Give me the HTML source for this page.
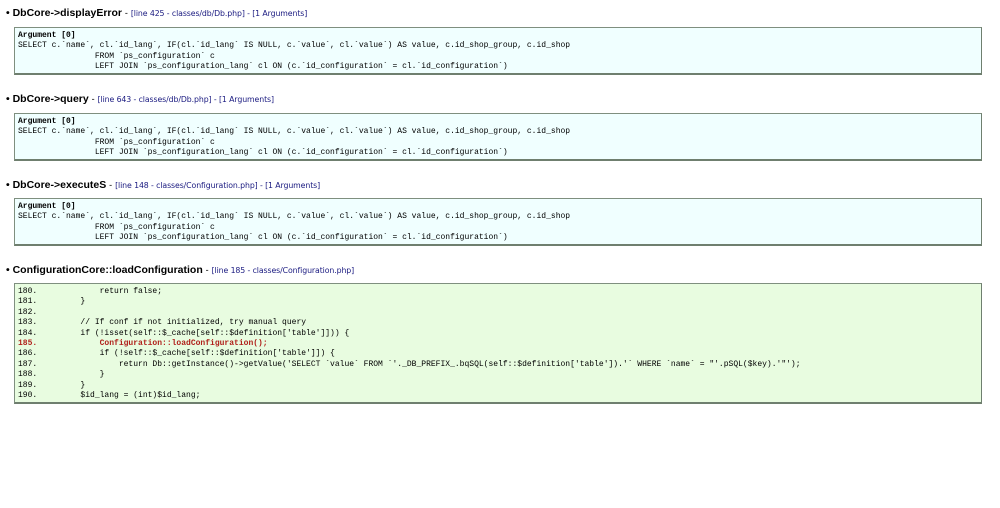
<!DOCTYPE html>
<html><head><meta charset="utf-8"><style>
body{margin:0;background:#fff;width:1000px;height:508px;overflow:hidden;position:relative;font-family:"DejaVu Sans","Liberation Sans",sans-serif}
.h{position:absolute;left:6px;font-family:"Liberation Sans",sans-serif;font-size:10.5px;font-weight:bold;color:#000;white-space:nowrap}
.h .l{font-family:"DejaVu Sans",sans-serif;font-weight:normal;font-size:7.8px;color:#1a1a80;letter-spacing:-0.1px}
.h .d{font-weight:normal;font-size:9px;color:#000}
.b{position:absolute;left:14px;width:966px;border:1px solid #7f8f7f;border-right-color:#6f7f6f;border-bottom:2px solid #6f7f6f;background:#f0ffff}
.g{background:#e8fce0}
pre{margin:0;padding:3px 0 0 3px;font-family:"Liberation Mono","Courier New",monospace;font-size:8px;line-height:10.4px;color:#000}
.r{color:#b0201a;font-weight:bold}
</style></head><body>
<div class="h" style="top:7px">• DbCore-&gt;displayError <span class="d">-</span> <span class="l">[line 425 - classes/db/Db.php] - [1 Arguments]</span></div>
<div class="b" style="top:27px;height:45px"><pre><b>Argument [0]</b>
SELECT c.`name`, cl.`id_lang`, IF(cl.`id_lang` IS NULL, c.`value`, cl.`value`) AS value, c.id_shop_group, c.id_shop
                FROM `ps_configuration` c
                LEFT JOIN `ps_configuration_lang` cl ON (c.`id_configuration` = cl.`id_configuration`)</pre></div>

<div class="h" style="top:93px">• DbCore-&gt;query <span class="d">-</span> <span class="l">[line 643 - classes/db/Db.php] - [1 Arguments]</span></div>
<div class="b" style="top:113px;height:45px"><pre><b>Argument [0]</b>
SELECT c.`name`, cl.`id_lang`, IF(cl.`id_lang` IS NULL, c.`value`, cl.`value`) AS value, c.id_shop_group, c.id_shop
                FROM `ps_configuration` c
                LEFT JOIN `ps_configuration_lang` cl ON (c.`id_configuration` = cl.`id_configuration`)</pre></div>

<div class="h" style="top:179px">• DbCore-&gt;executeS <span class="d">-</span> <span class="l">[line 148 - classes/Configuration.php] - [1 Arguments]</span></div>
<div class="b" style="top:198px;height:45px"><pre><b>Argument [0]</b>
SELECT c.`name`, cl.`id_lang`, IF(cl.`id_lang` IS NULL, c.`value`, cl.`value`) AS value, c.id_shop_group, c.id_shop
                FROM `ps_configuration` c
                LEFT JOIN `ps_configuration_lang` cl ON (c.`id_configuration` = cl.`id_configuration`)</pre></div>

<div class="h" style="top:264px">• ConfigurationCore::loadConfiguration <span class="d">-</span> <span class="l">[line 185 - classes/Configuration.php]</span></div>
<div class="b g" style="top:283px;height:118px"><pre>180.             return false;
181.         }
182.
183.         // If conf if not initialized, try manual query
184.         if (!isset(self::$_cache[self::$definition['table']])) {
<span class="r">185.             Configuration::loadConfiguration();</span>
186.             if (!self::$_cache[self::$definition['table']]) {
187.                 return Db::getInstance()->getValue('SELECT `value` FROM `'._DB_PREFIX_.bqSQL(self::$definition['table']).'` WHERE `name` = "'.pSQL($key).'"');
188.             }
189.         }
190.         $id_lang = (int)$id_lang;</pre></div>
</body></html>
